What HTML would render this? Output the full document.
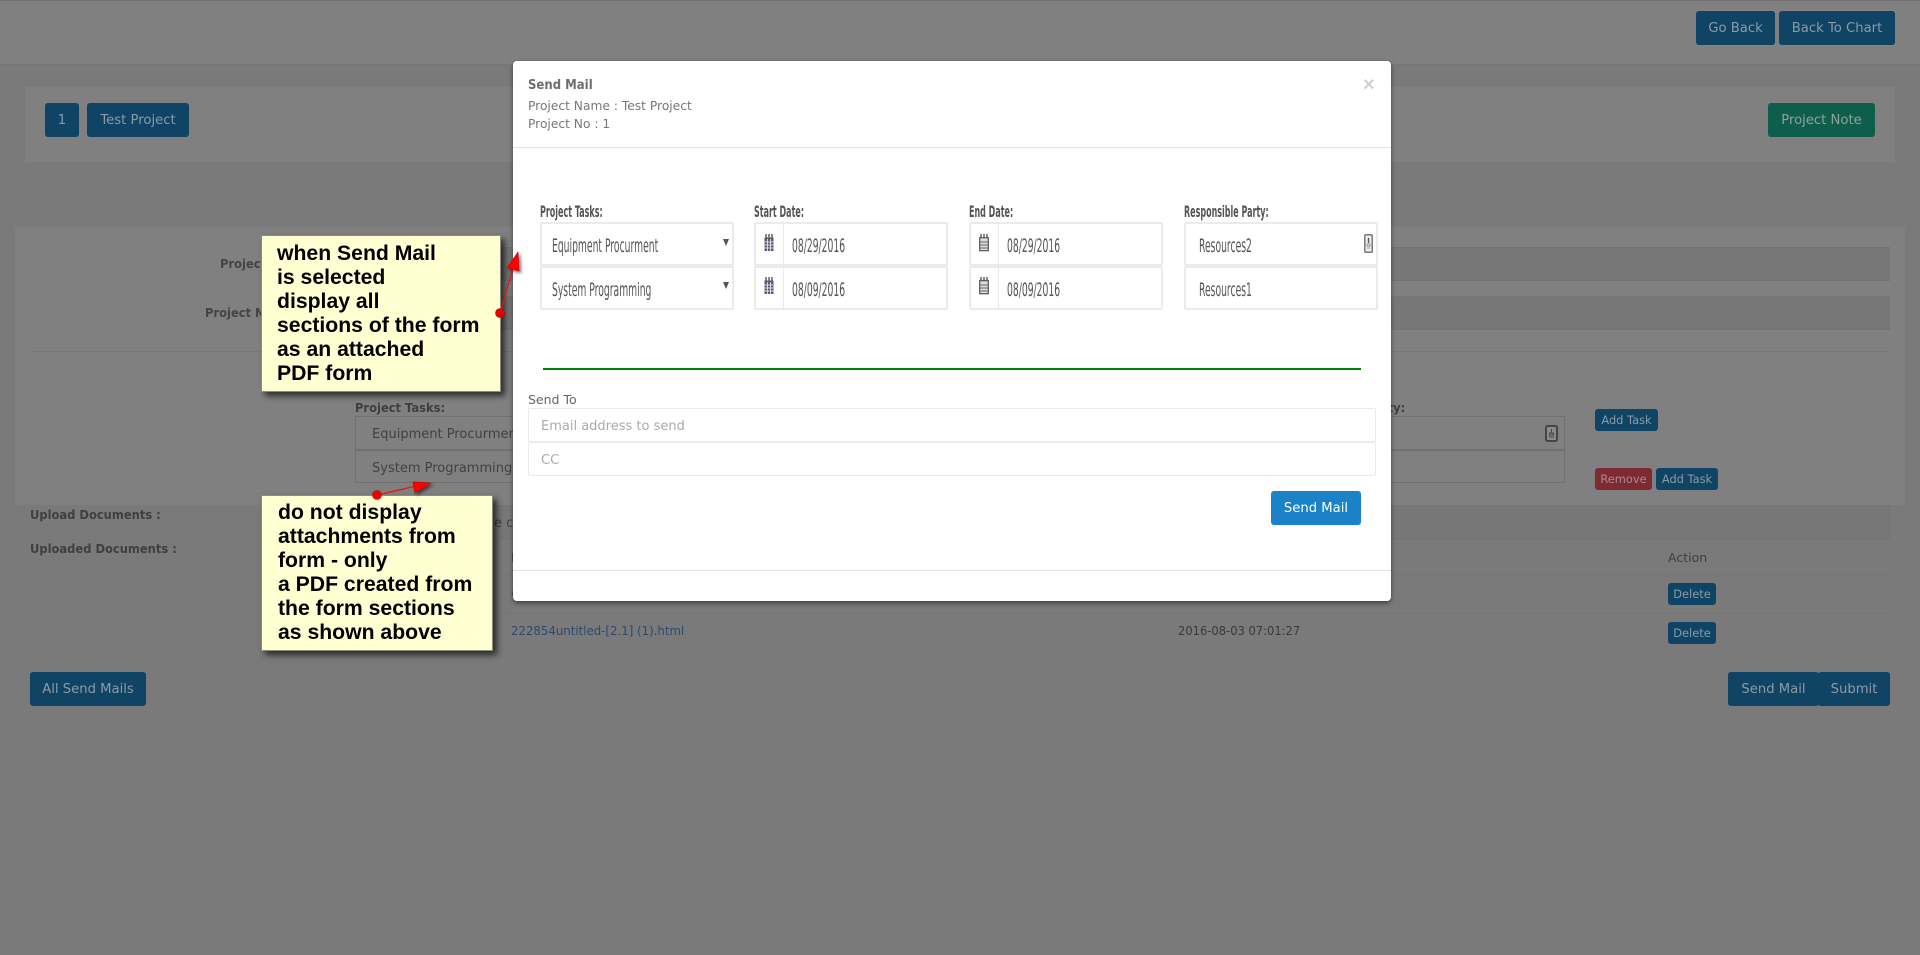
<!DOCTYPE html>
<html><head><meta charset="utf-8"><title>Send Mail</title>
<style>
html,body{margin:0;padding:0;width:1920px;height:955px;overflow:hidden;background:#7a7a7a;font-family:"DejaVu Sans","Liberation Sans",sans-serif}
div,span{box-sizing:border-box}
.a{position:absolute}
.t{position:absolute;white-space:nowrap;height:20px;line-height:20px;transform-origin:left center}
.b{position:absolute;border-radius:3px;background:#0f4465;color:#8b9aa5;font-size:13.2px;text-align:center;white-space:nowrap;padding-top:1px}
.b.s{background:#0f4465;font-size:11.4px;padding-top:0}
.f{position:absolute;border:2px solid #ebebeb;background:#fff;border-radius:2px}
.c{font-size:19px;color:#555;transform:scaleX(.485)}
.l{font-size:16px;font-weight:bold;color:#555;transform:scaleX(.5)}
.h{font-size:12.5px;font-weight:bold;color:#3f3f3f;transform:scaleX(.92)}
.n{font-family:"Liberation Sans",Arial,sans-serif;font-weight:bold;font-size:21.2px;color:#000;position:absolute;white-space:nowrap;line-height:24px}
.note{position:absolute;background:#ffffd2;border:1px solid #8c8c78;box-shadow:4px 4px 6px rgba(0,0,0,.65)}
</style></head><body>

<!-- background page -->
<div class="a" style="left:0;top:0;width:1920px;height:65px;background:#808080;border-top:1px solid #6e6e6e;border-bottom:1px solid #767676"></div>
<div class="b" style="left:1696px;top:11px;width:79px;height:34px;line-height:34px">Go Back</div>
<div class="b" style="left:1779px;top:11px;width:116px;height:34px;line-height:34px">Back To Chart</div>

<div class="a" style="left:25px;top:87px;width:1870px;height:75px;background:#808080"></div>
<div class="b" style="left:45px;top:103px;width:34px;height:34px;line-height:34px">1</div>
<div class="b" style="left:87px;top:103px;width:102px;height:34px;line-height:34px">Test Project</div>
<div class="b" style="left:1768px;top:103px;width:107px;height:34px;line-height:34px;background:#0f5e4c;color:#8aa39c">Project Note</div>

<div class="a" style="left:15px;top:227px;width:1890px;height:278px;background:#808080"></div>
<div class="t h" style="left:220px;top:254px;color:#444">Project Name</div>
<div class="t h" style="left:205px;top:303px;color:#444">Project No</div>
<div class="a" style="left:355px;top:247px;width:1535px;height:34px;background:#777;border:1px solid #747474"></div>
<div class="a" style="left:355px;top:296px;width:1535px;height:34px;background:#777;border:1px solid #747474"></div>
<div class="a" style="left:30px;top:351px;width:1860px;height:1px;background:#777"></div>
<div class="t h" style="left:355px;top:398px">Project Tasks:</div>
<div class="t h" style="left:1270px;top:398px;width:147px;text-align:right">Responsible Party:</div>
<div class="a" style="left:355px;top:416px;width:1210px;height:34px;border:1px solid #707070"></div>
<div class="a" style="left:355px;top:450px;width:1210px;height:33px;border:1px solid #707070"></div>
<div class="t" style="left:372px;top:425px;font-size:13px;color:#414141">Equipment Procurment</div>
<div class="t" style="left:372px;top:459px;font-size:13px;color:#414141">System Programming</div>
<svg class="a" style="left:1545px;top:425px" width="13" height="17" viewBox="0 0 13 17"><rect x="1" y="1" width="11" height="15" rx="1.5" fill="#8a8a8a" stroke="#454545" stroke-width="2"/><path d="M6.5 4v4M4.5 8h4v2h-4zM4 12h5" stroke="#454545" fill="none"/></svg>
<div class="b s" style="left:1595px;top:409px;width:63px;height:22px;line-height:22px">Add Task</div>
<div class="b s" style="left:1595px;top:468px;width:57px;height:22px;line-height:22px;background:#7f2a33;color:#a88a8e">Remove</div>
<div class="b s" style="left:1656px;top:468px;width:62px;height:22px;line-height:22px">Add Task</div>

<div class="t h" style="left:30px;top:505px">Upload Documents :</div>
<div class="t h" style="left:30px;top:539px">Uploaded Documents :</div>
<div class="a" style="left:500px;top:505px;width:1390px;height:34px;background:#777;border-bottom:1px solid #747474;border-right:1px solid #747474"></div>
<div class="t" style="left:494px;top:514px;font-size:13px;color:#414141">e ch</div>
<div class="a" style="left:505px;top:574px;width:1385px;height:1px;background:#757575"></div>
<div class="a" style="left:505px;top:613px;width:1385px;height:1px;background:#757575"></div>
<div class="t" style="left:511px;top:548px;font-size:12.5px;color:#5a3a2a">File</div>
<div class="t" style="left:511px;top:582px;font-size:12.5px;color:#2c4a6e">a</div>
<div class="t" style="left:1668px;top:548px;font-size:12.5px;color:#3f3f3f">Action</div>
<div class="b s" style="left:1668px;top:583px;width:48px;height:22px;line-height:22px">Delete</div>
<div class="b s" style="left:1668px;top:622px;width:48px;height:22px;line-height:22px">Delete</div>
<div class="t" style="left:511px;top:621px;font-size:12.5px;color:#2c4a6e;transform:scaleX(.94)">222854untitled-[2.1] (1).html</div>
<div class="t" style="left:1178px;top:621px;font-size:12.5px;color:#3a3a3a;transform:scaleX(.92)">2016-08-03 07:01:27</div>
<div class="b" style="left:30px;top:672px;width:116px;height:34px;line-height:34px">All Send Mails</div>
<div class="b" style="left:1728px;top:672px;width:91px;height:34px;line-height:34px">Send Mail</div>
<div class="b" style="left:1818px;top:672px;width:72px;height:34px;line-height:34px">Submit</div>

<!-- modal -->
<div class="a" style="left:513px;top:61px;width:878px;height:540px;background:#fff;border-radius:4px;box-shadow:0 2px 5px rgba(0,0,0,.5)"></div>
<div class="a" style="left:513px;top:147px;width:878px;height:1px;background:#e5e5e5"></div>
<div class="a" style="left:513px;top:570px;width:878px;height:1px;background:#e5e5e5"></div>
<div class="t" style="left:528px;top:76px;font-size:13px;font-weight:bold;color:#6e6e6e;transform:scaleX(.9)">Send Mail</div>
<div class="t" style="left:528px;top:96px;font-size:12.25px;color:#777">Project Name : Test Project</div>
<div class="t" style="left:528px;top:114px;font-size:12.25px;color:#777">Project No : 1</div>
<div class="t" style="left:1363px;top:75px;font-size:20px;font-weight:bold;color:#d0d0d0;font-family:'Liberation Sans',sans-serif">×</div>

<div class="t l" style="left:540px;top:202px">Project Tasks:</div>
<div class="t l" style="left:754px;top:202px">Start Date:</div>
<div class="t l" style="left:969px;top:202px">End Date:</div>
<div class="t l" style="left:1184px;top:202px">Responsible Party:</div>

<div class="f" style="left:540px;top:222px;width:194px;height:44px"></div>
<div class="f" style="left:540px;top:266px;width:194px;height:44px"></div>
<div class="f" style="left:754px;top:222px;width:194px;height:44px"></div>
<div class="f" style="left:754px;top:266px;width:194px;height:44px"></div>
<div class="f" style="left:969px;top:222px;width:194px;height:44px"></div>
<div class="f" style="left:969px;top:266px;width:194px;height:44px"></div>
<div class="f" style="left:1184px;top:222px;width:194px;height:44px"></div>
<div class="f" style="left:1184px;top:266px;width:194px;height:44px"></div>
<div class="a" style="left:783px;top:222px;width:1px;height:88px;background:#e8e8e8"></div>
<div class="a" style="left:998px;top:222px;width:1px;height:88px;background:#e8e8e8"></div>

<div class="t c" style="left:552px;top:236px">Equipment Procurment</div>
<div class="t c" style="left:552px;top:280px">System Programming</div>
<svg class="a" style="left:723px;top:239px" width="6" height="8"><path d="M0 0h6L3 7z" fill="#555"/></svg>
<svg class="a" style="left:723px;top:282px" width="6" height="8"><path d="M0 0h6L3 7z" fill="#555"/></svg>

<div class="t c" style="left:792px;top:236px">08/29/2016</div>
<div class="t c" style="left:792px;top:280px">08/09/2016</div>
<div class="t c" style="left:1007px;top:236px">08/29/2016</div>
<div class="t c" style="left:1007px;top:280px">08/09/2016</div>
<div class="t c" style="left:1199px;top:236px">Resources2</div>
<div class="t c" style="left:1199px;top:280px">Resources1</div>

<svg class="a" style="left:764px;top:234px" width="10" height="18" viewBox="0 0 10 18"><path d="M2 0v5M5 0v5M8 0v5" stroke="#555" stroke-width="1.4"/><rect x=".5" y="3.5" width="9" height="13.5" fill="#5a5a6e"/><path d="M3.5 5v12M6.5 5v12M0 8h10M0 11h10M0 14h10" stroke="#d9d9e8" stroke-width="1"/></svg>
<svg class="a" style="left:764px;top:277px" width="10" height="18" viewBox="0 0 10 18"><path d="M2 0v5M5 0v5M8 0v5" stroke="#555" stroke-width="1.4"/><rect x=".5" y="3.5" width="9" height="13.5" fill="#5a5a6e"/><path d="M3.5 5v12M6.5 5v12M0 8h10M0 11h10M0 14h10" stroke="#d9d9e8" stroke-width="1"/></svg>
<svg class="a" style="left:979px;top:234px" width="10" height="18" viewBox="0 0 10 18"><path d="M2 0v5M5 0v5M8 0v5" stroke="#555" stroke-width="1.4"/><rect x=".7" y="3.7" width="8.6" height="13" fill="#ddd" stroke="#555" stroke-width="1.2"/><path d="M0 8h10M0 11h10M0 14h10" stroke="#666" stroke-width="1"/></svg>
<svg class="a" style="left:979px;top:277px" width="10" height="18" viewBox="0 0 10 18"><path d="M2 0v5M5 0v5M8 0v5" stroke="#555" stroke-width="1.4"/><rect x=".7" y="3.7" width="8.6" height="13" fill="#ddd" stroke="#555" stroke-width="1.2"/><path d="M0 8h10M0 11h10M0 14h10" stroke="#666" stroke-width="1"/></svg>
<svg class="a" style="left:1364px;top:234px" width="9" height="19" viewBox="0 0 9 19"><rect x=".8" y=".8" width="7.4" height="17.4" rx="1" fill="#f0f0f0" stroke="#808080" stroke-width="1.6"/><path d="M4.5 4v5" stroke="#555" stroke-width="1.4"/><path d="M3 10h3v2H3zM3 14h3" stroke="#999" fill="none"/></svg>

<div class="a" style="left:543px;top:368px;width:818px;height:2px;background:#008000"></div>
<div class="t" style="left:528px;top:390px;font-size:12.5px;color:#666">Send To</div>
<div class="f" style="left:528px;top:408px;width:848px;height:34px;border-width:1.5px"></div>
<div class="f" style="left:528px;top:442px;width:848px;height:34px;border-width:1.5px"></div>
<div class="t" style="left:541px;top:417px;font-size:13px;color:#aaa">Email address to send</div>
<div class="t" style="left:541px;top:451px;font-size:13px;color:#aaa">CC</div>
<div class="b" style="left:1271px;top:491px;width:90px;height:34px;line-height:34px;background:#1a82c6;color:#fff">Send Mail</div>

<!-- callouts -->
<div class="note" style="left:261px;top:235px;width:240px;height:157px"></div>
<div class="n" style="left:277px;top:242px">when Send Mail<br>is selected<br>display all<br>sections of the form<br>as an attached<br>PDF form</div>

<div class="note" style="left:261px;top:495px;width:232px;height:156px"></div>
<div class="n" style="left:278px;top:501px">do not display<br>attachments from<br>form - only<br>a PDF created from<br>the form sections<br>as shown above</div>

<svg class="a" style="left:0;top:0;pointer-events:none" width="1920" height="955">
<defs><filter id="s" x="-50%" y="-50%" width="200%" height="200%"><feDropShadow dx="2" dy="2" stdDeviation="1.5" flood-color="#000" flood-opacity=".55"/></filter></defs>
<path d="M500 313L514 265" stroke="#f01010" stroke-width="1.2"/>
<path d="M518 252L507 268L519 271Z" fill="#ff0000" stroke="#c00000" stroke-width=".6" filter="url(#s)"/>
<circle cx="500" cy="313" r="4.5" fill="#f00000" stroke="#b00000" stroke-width=".6"/>
<path d="M377 495L416 486" stroke="#f01010" stroke-width="1.2"/>
<path d="M431 483L413 482L415 493Z" fill="#ff0000" stroke="#c00000" stroke-width=".6" filter="url(#s)"/>
<circle cx="377" cy="495" r="4.5" fill="#f00000" stroke="#b00000" stroke-width=".6"/>
</svg>
</body></html>
